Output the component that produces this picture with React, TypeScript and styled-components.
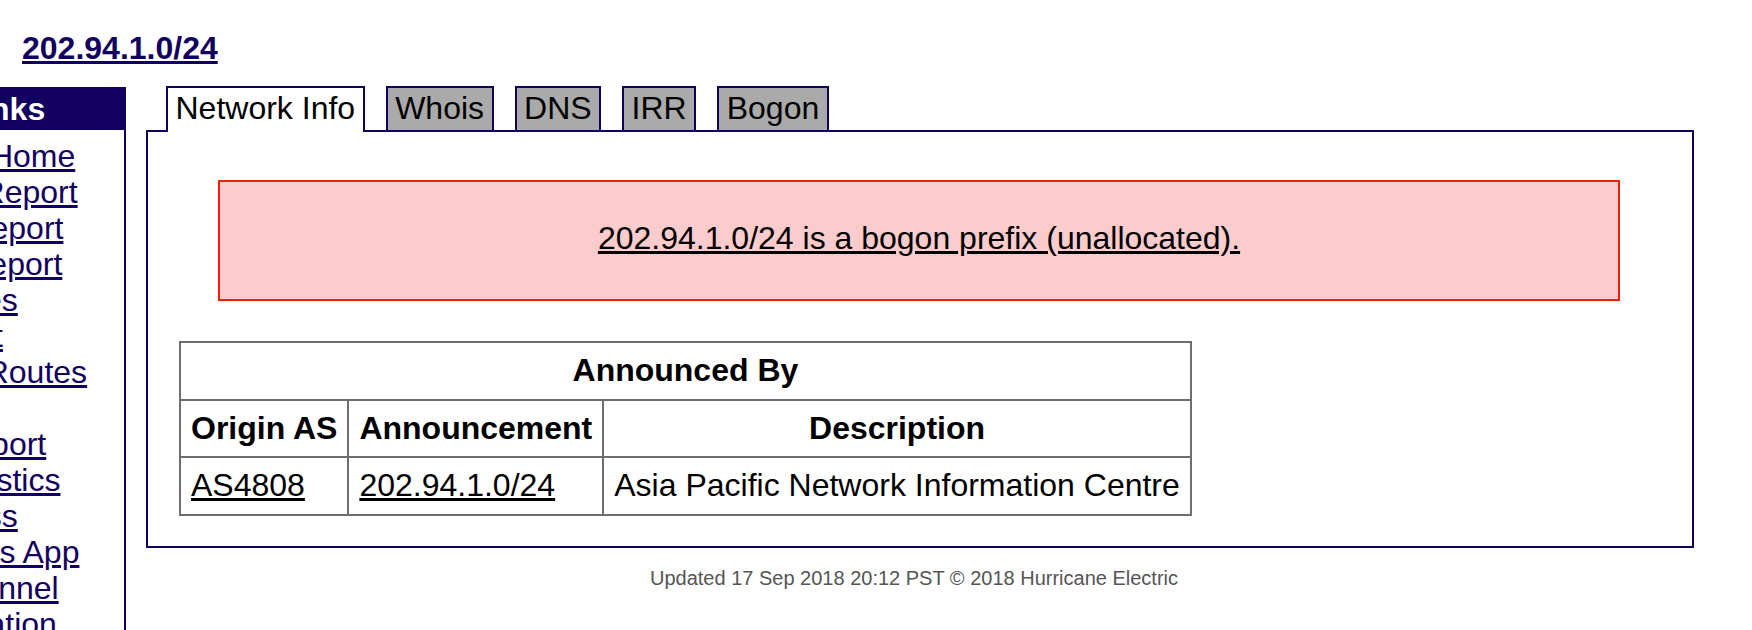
import React from 'react';
import styled, { createGlobalStyle } from 'styled-components';

const NAVY = '#120061';
const FONT = `"Liberation Sans", Arial, Helvetica, sans-serif`;

const Global = createGlobalStyle`
  html, body {
    margin: 0;
    padding: 0;
    background: #ffffff;
    overflow: hidden;
  }
  body {
    font-family: ${FONT};
    font-size: 32px;
    color: #000000;
  }
`;

const Page = styled.div`
  width: 1752px;
  height: 630px;
  overflow: hidden;
`;

const Title = styled.h1`
  margin: 0;
  padding: 30px 0 0 22px;
  font-size: 32px;
  font-weight: bold;
  line-height: 37px;

  a {
    color: ${NAVY};
    text-decoration: underline;
  }
`;

const Layout = styled.div`
  display: flex;
  align-items: flex-start;
  margin: 19px 0 0 -215px;
`;

const Sidebar = styled.nav`
  flex: none;
  width: 339px;
  min-height: 600px;
  margin-top: 1px;
  border-right: 2px solid ${NAVY};
`;

const SidebarTitle = styled.div`
  background: ${NAVY};
  color: #ffffff;
  font-weight: bold;
  text-align: center;
  line-height: 37px;
  padding: 4px 0 2px;
`;

const LinkList = styled.ul`
  list-style: none;
  margin: 0;
  padding: 8px 0 0 30px;
`;

const SideLink = styled.a`
  display: block;
  line-height: 36px;
  color: ${NAVY};
  text-decoration: underline;
  white-space: nowrap;
`;

const Main = styled.main`
  flex: none;
  width: 1548px;
  margin-left: 20px;
`;

const TabRow = styled.div`
  display: flex;
  align-items: flex-end;
  gap: 21px;
  height: 44px;
  padding-left: 20px;
`;

const Tab = styled.a<{ $active?: boolean }>`
  box-sizing: border-box;
  display: block;
  position: relative;
  z-index: ${(p) => (p.$active ? 1 : 0)};
  border: 2px solid ${NAVY};
  border-bottom: none;
  padding: 2px 7.5px ${(p) => (p.$active ? '5px' : '3px')};
  margin-bottom: ${(p) => (p.$active ? '-2px' : '0')};
  line-height: 37px;
  background: ${(p) => (p.$active ? '#ffffff' : '#aaaaaa')};
  color: #000000;
  text-decoration: none;
  white-space: nowrap;
`;

const Panel = styled.section`
  border: 2px solid ${NAVY};
  padding: 48px 31px 30px;
  background: #ffffff;
`;

const Alert = styled.div`
  margin: 0 41px 40px 39px;
  border: 2px solid #f0200a;
  background: #fccccc;
  padding: 38px 0 42px;
  text-align: center;
  line-height: 37px;

  a {
    color: #000000;
    text-decoration: underline;
  }
`;

const Table = styled.table`
  border-collapse: collapse;
  font-size: 32px;
`;

const Th = styled.th`
  border: 2px solid #6e6e6e;
  padding: 9px 10px;
  line-height: 37.5px;
  font-weight: bold;
  text-align: center;
  white-space: nowrap;
`;

const Td = styled.td`
  border: 2px solid #6e6e6e;
  padding: 9px 10px;
  line-height: 37.5px;
  text-align: left;
  white-space: nowrap;

  a {
    color: #000000;
    text-decoration: underline;
  }
`;

const Footer = styled.footer`
  margin-top: 19px;
  padding-right: 12px;
  text-align: center;
  font-size: 20px;
  line-height: 23px;
  color: #555555;
`;

const sideLinks = [
  'BGP Toolkit Home',
  'BGP Prefix Report',
  'BGP Peer Report',
  'Exchange Report',
  'Bogon Routes',
  'World Report',
  'Multi Origin Routes',
  'DNS Report',
  'Top Host Report',
  'Internet Statistics',
  'Looking Glass',
  'Network Tools App',
  'Free IPv6 Tunnel',
  'IPv6 Certification',
  'IPv6 Progress',
  'Going Native',
  'Contact Us',
];

const tabs = ['Network Info', 'Whois', 'DNS', 'IRR', 'Bogon'];

export default function App() {
  return (
    <Page>
      <Global />
      <Title>
        <a href="#prefix">202.94.1.0/24</a>
      </Title>
      <Layout>
        <Sidebar>
          <SidebarTitle>Quick Links</SidebarTitle>
          <LinkList>
            {sideLinks.map((l) => (
              <li key={l}>
                <SideLink href="#link">{l}</SideLink>
              </li>
            ))}
          </LinkList>
        </Sidebar>
        <Main>
          <TabRow>
            {tabs.map((t, i) => (
              <Tab key={t} href="#tab" $active={i === 0}>
                {t}
              </Tab>
            ))}
          </TabRow>
          <Panel>
            <Alert>
              <a href="#bogon">202.94.1.0/24 is a bogon prefix (unallocated).</a>
            </Alert>
            <Table>
              <thead>
                <tr>
                  <Th colSpan={3}>Announced By</Th>
                </tr>
                <tr>
                  <Th>Origin AS</Th>
                  <Th>Announcement</Th>
                  <Th>Description</Th>
                </tr>
              </thead>
              <tbody>
                <tr>
                  <Td>
                    <a href="#as">AS4808</a>
                  </Td>
                  <Td>
                    <a href="#net">202.94.1.0/24</a>
                  </Td>
                  <Td>Asia Pacific Network Information Centre</Td>
                </tr>
              </tbody>
            </Table>
          </Panel>
          <Footer>Updated 17 Sep 2018 20:12 PST © 2018 Hurricane Electric</Footer>
        </Main>
      </Layout>
    </Page>
  );
}
